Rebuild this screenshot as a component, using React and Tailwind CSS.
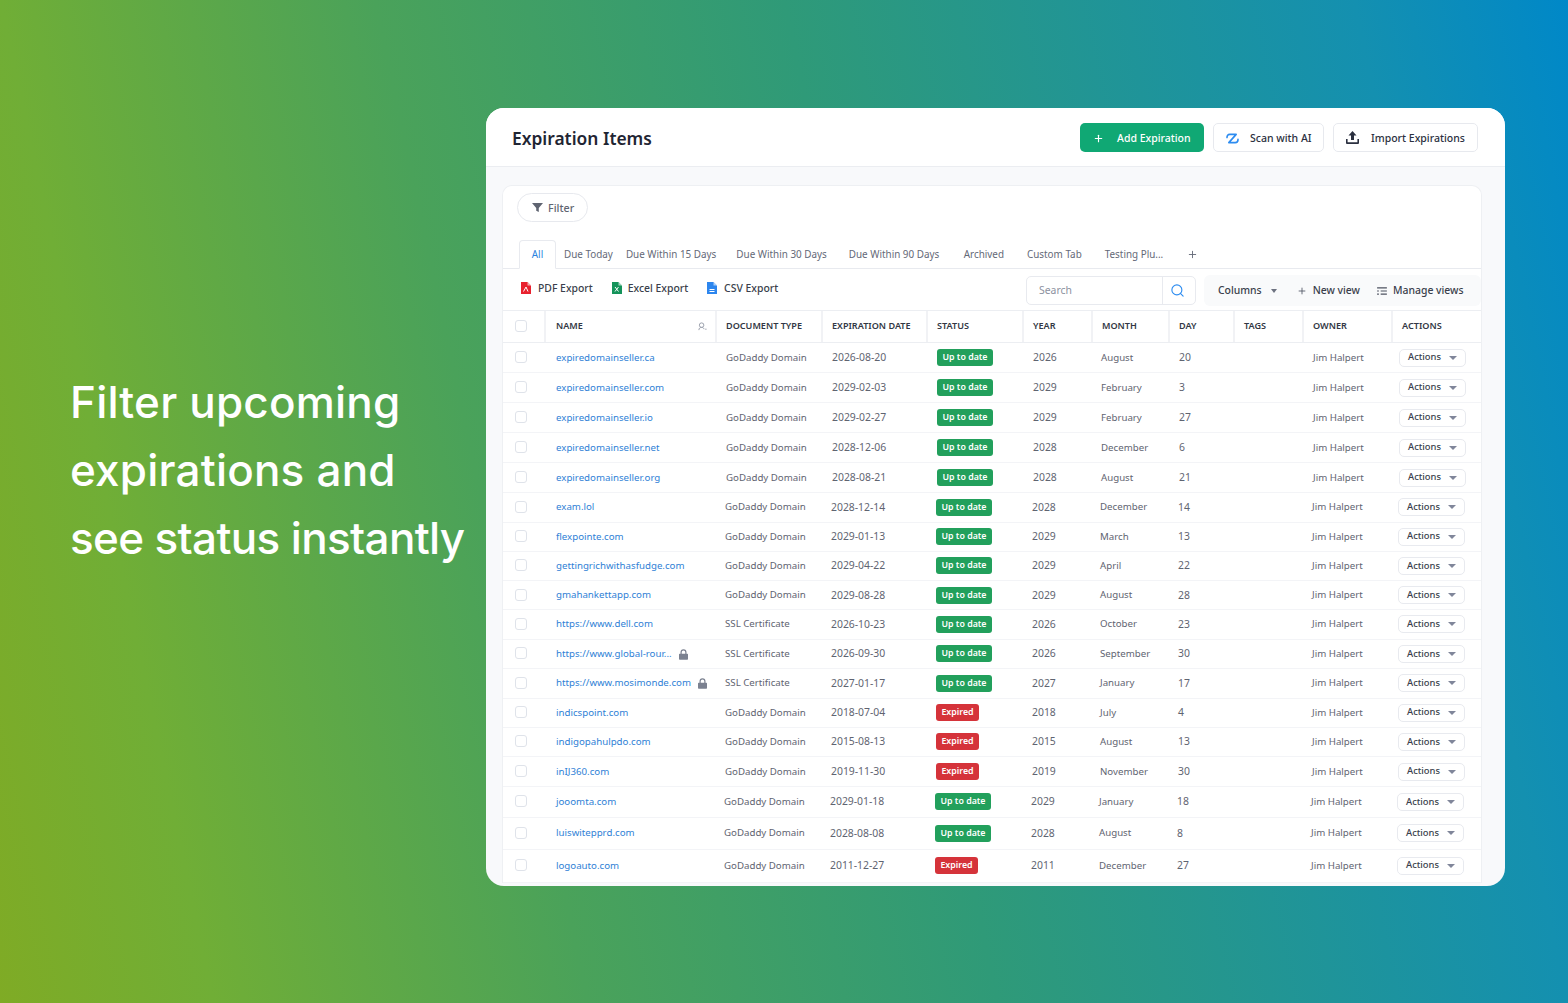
import { Plus, Search } from "lucide-react";

const rows = [
  ["expiredomainseller.ca", "GoDaddy Domain", "2026-08-20", "ok", "2026", "August", "20", 30],
  ["expiredomainseller.com", "GoDaddy Domain", "2029-02-03", "ok", "2029", "February", "3", 30],
  ["expiredomainseller.io", "GoDaddy Domain", "2029-02-27", "ok", "2029", "February", "27", 30],
  ["expiredomainseller.net", "GoDaddy Domain", "2028-12-06", "ok", "2028", "December", "6", 30],
  ["expiredomainseller.org", "GoDaddy Domain", "2028-08-21", "ok", "2028", "August", "21", 30],
  ["exam.lol", "GoDaddy Domain", "2028-12-14", "ok", "2028", "December", "14", 29.5],
  ["flexpointe.com", "GoDaddy Domain", "2029-01-13", "ok", "2029", "March", "13", 29],
  ["gettingrichwithasfudge.com", "GoDaddy Domain", "2029-04-22", "ok", "2029", "April", "22", 29.5],
  ["gmahankettapp.com", "GoDaddy Domain", "2029-08-28", "ok", "2029", "August", "28", 29],
  ["https://www.dell.com", "SSL Certificate", "2026-10-23", "ok", "2026", "October", "23", 29.5],
  ["https://www.global-rour...", "SSL Certificate", "2026-09-30", "ok", "2026", "September", "30", 29.5, true],
  ["https://www.mosimonde.com", "SSL Certificate", "2027-01-17", "ok", "2027", "January", "17", 29.5, true],
  ["indicspoint.com", "GoDaddy Domain", "2018-07-04", "exp", "2018", "July", "4", 29],
  ["indigopahulpdo.com", "GoDaddy Domain", "2015-08-13", "exp", "2015", "August", "13", 29.5],
  ["inIJ360.com", "GoDaddy Domain", "2019-11-30", "exp", "2019", "November", "30", 30],
  ["jooomta.com", "GoDaddy Domain", "2029-01-18", "ok", "2029", "January", "18", 30.5],
  ["luiswitepprd.com", "GoDaddy Domain", "2028-08-08", "ok", "2028", "August", "8", 32],
  ["logoauto.com", "GoDaddy Domain", "2011-12-27", "exp", "2011", "December", "27", 33],
];

const tabs = [
  ["Due Today", "ml-[8px]"],
  ["Due Within 15 Days", "ml-[13px]"],
  ["Due Within 30 Days", "ml-[20px]"],
  ["Due Within 90 Days", "ml-[22px]"],
  ["Archived", "ml-[24.5px]"],
  ["Custom Tab", "ml-[23px]"],
  ["Testing Plu...", "ml-[23px]"],
];

const cols = "grid grid-cols-[43px_171px_106px_105px_96px_69px_77px_65px_69px_89px_90px]";
const headers = ["DOCUMENT TYPE", "EXPIRATION DATE", "STATUS", "YEAR", "MONTH", "DAY", "TAGS", "OWNER", "ACTIONS"];

function Check() {
  return <span className="block h-3 w-3 rounded-[3px] border border-[#dfe3ea] bg-white" />;
}

function Lock() {
  return (
    <svg viewBox="0 0 12 14" className="h-[11px] w-[9px] shrink-0 fill-[#7b8190]">
      <path d="M2 6V4a4 4 0 0 1 8 0v2h1a1 1 0 0 1 1 1v6a1 1 0 0 1-1 1H1a1 1 0 0 1-1-1V7a1 1 0 0 1 1-1h1zm1.6 0h4.8V4a2.4 2.4 0 0 0-4.8 0v2z" />
    </svg>
  );
}

function FileIcon({ color, label }) {
  return (
    <svg viewBox="0 0 10 12" className="h-[12px] w-[10px] shrink-0">
      <path d="M0 0h6.5L10 3.5V12H0z" fill={color} />
      <path d="M6.5 0L10 3.5H6.5z" fill="#ffffff" fillOpacity="0.6" />
      <path d={label} stroke="#ffffff" strokeWidth="1" fill="none" />
    </svg>
  );
}

function Row({ row, index }) {
  const [name, type, date, status, year, month, day, h, lock] = row;
  // the lower rows sit slightly further left
  const shift = index < 5 ? "" : index < 15 ? "-translate-x-px" : "-translate-x-[2px]";
  return (
    <div className={`${cols} items-center border-b border-[#f3f4f7] text-[9.7px] text-[#5f6471]`} style={{ height: h }}>
      <div className="pb-px pl-[12px]"><Check /></div>
      <div className="flex items-center gap-[7px] pl-[10px] pt-px text-[#2f7fd6]">
        <span className="whitespace-nowrap">{name}</span>
        {lock && <Lock />}
      </div>
      <div className={`pl-[9px] pt-px ${shift}`}>{type}</div>
      <div className={`pl-[9px] pt-px text-[10.4px] ${shift}`}>{date}</div>
      <div className={`pl-[9px] ${shift}`}>
        {status === "ok" ? (
          <span className="block h-[17px] w-[56px] rounded-[3px] bg-[#22a05c] text-center text-[8.8px] font-semibold leading-[17px] text-white">Up to date</span>
        ) : (
          <span className="block h-[17px] w-[43px] rounded-[3px] bg-[#d5333a] text-center text-[8.8px] font-semibold leading-[17px] text-white">Expired</span>
        )}
      </div>
      <div className={`pl-[9px] pt-px text-[10.4px] ${shift}`}>{year}</div>
      <div className={`pl-[8px] pt-px ${shift}`}>{month}</div>
      <div className={`pl-[9px] pt-px text-[10.4px] ${shift}`}>{day}</div>
      <div />
      <div className={`pl-[9px] pt-px ${shift}`}>Jim Halpert</div>
      <div className={`pl-[6px] ${shift}`}>
        <span className="flex h-[18px] w-[67px] items-center justify-between rounded-[5px] border border-[#e8eaef] bg-white px-[8px] text-[9.4px] font-medium text-[#3a3f4c]">
          Actions
          <span className="h-0 w-0 border-x-[4px] border-t-[4px] border-x-transparent border-t-[#80869a]" />
        </span>
      </div>
    </div>
  );
}

export default function App() {
  return (
    <div className="flex h-[1003px] w-[1568px] overflow-hidden bg-[linear-gradient(78deg,#7fab25_0%,#70ae36_12%,#4aa25a_33%,#2f9a78_56%,#1490b0_88%,#0088c8_100%)] font-['Noto_Sans',sans-serif]">
      <h1 className="ml-[70px] mt-[368px] w-[416px] font-['Inter',sans-serif] text-[44px] font-[450] leading-[68px] tracking-[0.2px] text-white">
        Filter upcoming<br />expirations and<br /><span className="tracking-[-0.65px]">see status instantly</span>
      </h1>

      {/* panel */}
      <div className="mt-[108px] h-[778px] w-[1019px] overflow-hidden rounded-[18px] bg-[#f8f9fb]">
        <div className="flex h-[59px] items-center justify-between border-b border-[#ebedf1] bg-white pl-[26px] pr-[27px]">
          <div className="pt-[2px] text-[17.4px] font-semibold text-[#1f2533]">Expiration Items</div>
          <div className="flex gap-[9px] text-[10.5px] font-medium text-[#2b3040]">
            <button className="flex h-[29px] w-[124px] items-center gap-[13px] rounded-[5px] bg-[#10a874] pl-[13px] pt-[2px] text-white">
              <Plus size={11} strokeWidth={2.5} />
              <span className="pt-[2px]">Add Expiration</span>
            </button>
            <button className="flex h-[29px] w-[111px] items-center gap-[11px] rounded-[5px] border border-[#e7e9ee] bg-white pl-[12px] pt-[2px]">
              <svg viewBox="0 0 14 12" className="h-[11px] w-[13px] fill-none stroke-[#2d8cf0] stroke-[1.8]" strokeLinecap="round" strokeLinejoin="round">
                <path d="M1 5Q1 1.5 4 1.5H11L3 10.5H10Q13 10.5 13 7" />
              </svg>
              <span className="pt-[2px]">Scan with AI</span>
            </button>
            <button className="flex h-[29px] w-[145px] items-center gap-[12px] rounded-[5px] border border-[#e7e9ee] bg-white pl-[12px] pt-px">
              <svg viewBox="0 0 13 13" className="h-[13px] w-[13px] fill-[#2b3040]">
                <path d="M6.5 0l4 4.5H8V9H5V4.5H2.5z" />
                <path d="M0 8h1.6v3.2h9.8V8H13v4a1 1 0 0 1-1 1H1a1 1 0 0 1-1-1z" />
              </svg>
              <span className="pt-[3px]">Import Expirations</span>
            </button>
          </div>
        </div>

        <div className="ml-[16px] mt-[18px] w-[980px] rounded-t-[10px] border border-b-0 border-[#eef0f3] bg-white">
          <div className="flex h-[83px] flex-col">
            <button className="ml-[14px] mt-[7px] flex h-[29px] w-[71px] items-center gap-[5px] rounded-full border border-[#e7e9ee] pl-[14px] text-[10.7px] font-medium text-[#5f6471]">
              <svg viewBox="0 0 12 12" className="h-[11px] w-[11px] fill-[#5f6471]"><path d="M0 1h12L7.4 6.5V11L4.6 9.5v-3z" /></svg>
              <span className="pt-px">Filter</span>
            </button>
            <div className="mt-[18px] flex h-[29px] items-center border-b border-[#e8eaef] pl-[16px] text-[9.9px] text-[#646977]">
              <span className="flex h-[29px] w-[37px] items-center justify-center rounded-t-[4px] border border-[#e8eaef] border-b-white bg-white text-[#2b82e0]">All</span>
              {tabs.map(([t, m]) => (
                <span key={t} className={`${m} whitespace-nowrap`}>{t}</span>
              ))}
              <Plus size={11} strokeWidth={2} className="ml-[24px]" />
            </div>
          </div>

          <div className="flex h-[42px] items-center border-b border-[#eceef2] text-[10.4px] font-medium text-[#3a3f4c]">
            <div className="flex flex-1 items-center whitespace-nowrap pb-[2px] pl-[18px]">
              <div className="flex items-center gap-[7px]">
                <FileIcon color="#e8212e" label="M2.5 9.5L5 5l2 4.5" />
                PDF Export
              </div>
              <div className="ml-[19px] flex items-center gap-[6px]">
                <FileIcon color="#14935a" label="M3 5l3.5 4.5M6.5 5L3 9.5" />
                Excel Export
              </div>
              <div className="ml-[19px] flex items-center gap-[7px]">
                <FileIcon color="#2d86ee" label="M2.5 7.5h5M2.5 9.5h5" />
                CSV Export
              </div>
            </div>
            <div className="mt-[2px] flex h-[29px] w-[170px] shrink-0 items-center rounded-[5px] border border-[#e8eaef] bg-white">
              <span className="flex-1 pl-[12px] font-normal text-[#8c91a0]">Search</span>
              <span className="flex h-full w-[33px] items-center justify-center border-l border-[#e8eaef] pr-[3px]">
                <Search size={15} strokeWidth={1.8} className="text-[#2d8cf0]" />
              </span>
            </div>
            <div className="ml-[8px] mt-[2px] flex h-[31px] w-[277px] shrink-0 items-center whitespace-nowrap rounded-[6px] bg-[#f9fafb] pl-[14px] text-[#3a3f4c]">
              Columns
              <span className="ml-[9px] h-0 w-0 border-x-[3.5px] border-t-[4px] border-x-transparent border-t-[#6d7280]" />
              <Plus size={10} strokeWidth={2} className="ml-[20px] shrink-0 text-[#4d5260]" />
              <span className="ml-[6px]">New view</span>
              <svg viewBox="0 0 11 9" className="ml-[17px] h-[8px] w-[10px] shrink-0 stroke-[#4d5260] stroke-[1.2]">
                <path d="M0 1h11M0 4.5h2M4 4.5h7M0 8h2M4 8h7" />
              </svg>
              <span className="ml-[6px]">Manage views</span>
            </div>
          </div>

          <div className={`${cols} h-[32px] items-center border-b border-[#eceef2] text-[9.1px] font-semibold text-[#323744]`}>
            <div className="flex h-full items-center border-r-2 border-[#f1f2f5] pb-px pl-[12px]"><Check /></div>
            <div className="flex h-full items-center justify-between border-r-2 border-[#f1f2f5] pb-px pl-[10px] pr-[8px]">
              NAME
              <svg viewBox="0 0 10 10" className="h-[9px] w-[9px] fill-none stroke-[#9398a6]">
                <circle cx="4" cy="3.5" r="2.5" />
                <path d="M1 9c0-2 1.2-3 3-3s2.5 1 2.7 2M8 8h1.5" />
              </svg>
            </div>
            {headers.map((h, i) => (
              <div key={h} className={`flex h-full items-center pb-px pl-[9px] ${i < headers.length - 1 ? "border-r-2 border-[#f1f2f5]" : ""}`}>{h}</div>
            ))}
          </div>

          {rows.map((r, i) => (
            <Row key={r[0]} row={r} index={i} />
          ))}
        </div>
      </div>
    </div>
  );
}
